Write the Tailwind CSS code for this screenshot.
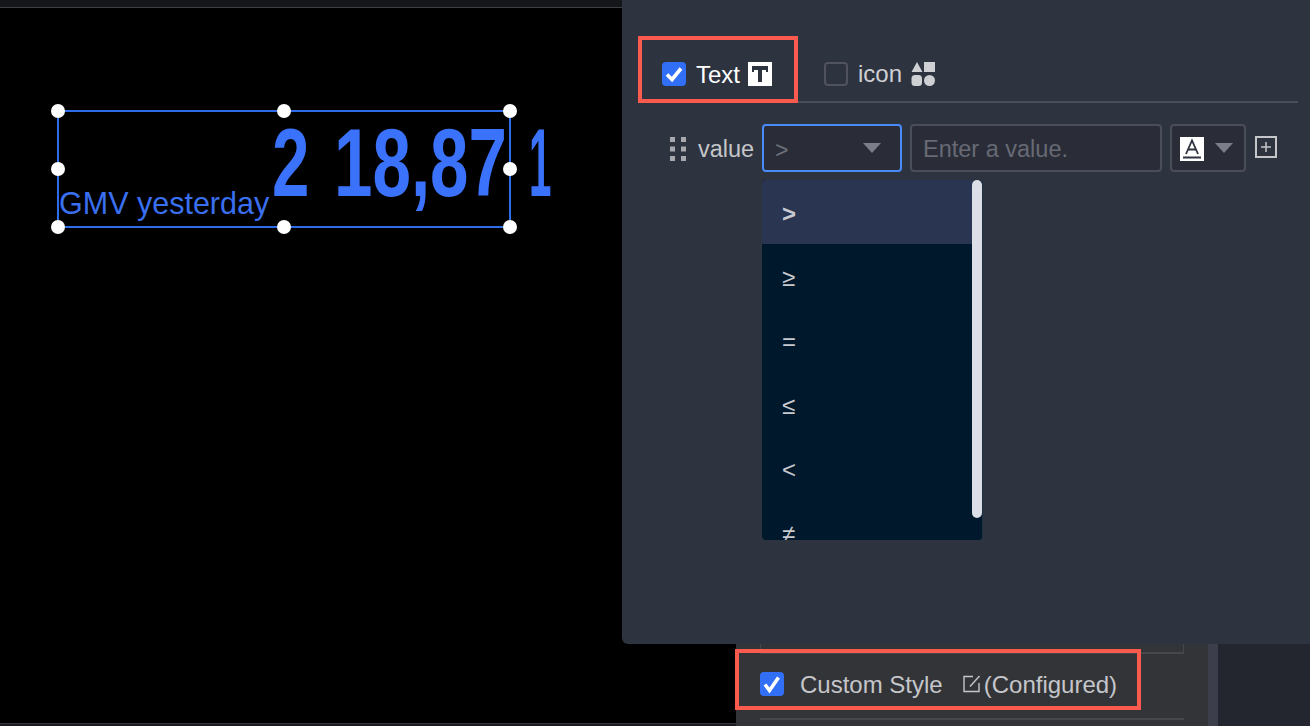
<!DOCTYPE html>
<html lang="en">
<head>
  <meta charset="UTF-8">
  <title>Custom Style</title>
  <script src="https://cdn.jsdelivr.net/npm/@tailwindcss/browser@4"></script>
</head>
<body class="bg-black font-['Liberation_Sans',Arial,sans-serif]">
  <div class="relative flex w-[1310px] h-[726px] overflow-hidden bg-black">

    <!-- canvas side -->
    <div class="relative w-[736px] h-full flex flex-col">
      <div class="h-[7px] bg-[#14161a]"></div>
      <div class="h-px bg-[#3c423f]"></div>
      <div class="relative flex-1">
        <!-- selected widget -->
        <div class="absolute left-[57px] top-[102px] w-[454px] h-[118px] border-2 border-[#2f6ce8]"></div>
        <span class="absolute left-[59px] top-[177px] text-[30.500px] leading-[36px] text-[#3a6ff0] whitespace-nowrap">GMV yesterday</span>
        <span class="absolute left-[272px] top-[100px] text-[96px] leading-[110px] font-bold text-[#3a72fb] origin-left scale-x-[0.7]">2</span>
        <span class="absolute left-[334px] top-[100px] text-[96px] leading-[110px] font-bold text-[#3a72fb] origin-left scale-x-[0.72] whitespace-nowrap">18,87</span>
        <span class="absolute left-[529px] top-[100px] text-[96px] leading-[110px] font-bold text-[#3a72fb] origin-left scale-x-[0.42]">1</span>
        <!-- handles -->
        <div class="absolute left-[51px] top-[96px] w-[14px] h-[14px] rounded-full bg-white"></div>
        <div class="absolute left-[277px] top-[96px] w-[14px] h-[14px] rounded-full bg-white"></div>
        <div class="absolute left-[503px] top-[96px] w-[14px] h-[14px] rounded-full bg-white"></div>
        <div class="absolute left-[51px] top-[154px] w-[14px] h-[14px] rounded-full bg-white"></div>
        <div class="absolute left-[503px] top-[154px] w-[14px] h-[14px] rounded-full bg-white"></div>
        <div class="absolute left-[51px] top-[212px] w-[14px] h-[14px] rounded-full bg-white"></div>
        <div class="absolute left-[277px] top-[212px] w-[14px] h-[14px] rounded-full bg-white"></div>
        <div class="absolute left-[503px] top-[212px] w-[14px] h-[14px] rounded-full bg-white"></div>
      </div>
      <div class="h-px bg-[#35363a]"></div>
      <div class="h-[2px] bg-[#1b1c1f]"></div>
    </div>

    <!-- settings column below the popup -->
    <div class="w-[472px] h-full bg-[#333438] flex flex-col pt-[644px] px-6">
      <div class="h-[10px] w-[424px] border-x border-b-2 border-[#46474b]"></div>
      <div class="flex items-center h-[60px] mb-1 -mx-6 pl-6">
        <span class="flex items-center justify-center w-6 h-6 rounded bg-[#316ff6]">
          <svg viewBox="0 0 24 24" class="w-6 h-6"><path d="M5 12.500l4.500 6 9-13" fill="none" stroke="#fff" stroke-width="3.600"/></svg>
        </span>
        <span class="ml-4 pt-[2px] text-[24px] text-[#c5c6c9] whitespace-nowrap">Custom Style</span>
        <svg viewBox="0 0 18 18" class="ml-[20px] w-[18px] h-[18px]"><path d="M10 1.500H1v15h15V8M16.500 1L7 11.500" fill="none" stroke="#c5c6c9" stroke-width="1.400"/></svg>
        <span class="ml-[3px] pt-[2px] text-[24px] text-[#c5c6c9] whitespace-nowrap">(Configured)</span>
      </div>
      <div class="h-[2px] w-[424px] bg-[#46474b]"></div>
    </div>
    <div class="w-[10px] h-full bg-[#3c3e4c]"></div>
    <div class="flex-1 h-full bg-[#24262f]"></div>

    <!-- red callout round the custom style row -->
    <div class="absolute left-[735px] top-[649px] w-[406px] h-[61px] border-4 border-[#fb5a4e]"></div>

    <!-- popup -->
    <div class="absolute left-[622px] top-0 w-[688px] h-[644px] bg-[#2e3340] rounded-bl-md pt-9">
      <div class="flex items-stretch h-[67px] ml-4 mr-3 border-b-2 border-[#4b4e58]">
        <div class="flex items-center w-[160px] h-[67px] -mb-[2px] border-4 border-[#fb5a4e] pl-5 pt-2">
          <span class="flex items-center justify-center w-6 h-6 rounded bg-[#316ff6]">
            <svg viewBox="0 0 24 24" class="w-6 h-6"><path d="M5 12.500l5 5 9-11" fill="none" stroke="#fff" stroke-width="3.600"/></svg>
          </span>
          <span class="ml-[10px] pt-[2px] text-[24px] text-white">Text</span>
          <svg viewBox="0 0 24 24" class="ml-2 w-6 h-6"><rect width="24" height="24" fill="#fff"/><path d="M4 4h16v6h-2V8h-4v12h-4V8H6v2H4z" fill="#2e3340"/></svg>
        </div>
        <div class="flex items-center pl-[26px] pt-[11px]">
          <span class="w-6 h-6 rounded border-2 border-[#50535d]"></span>
          <span class="ml-[10px] text-[24px] text-[#d0d1d4]">icon</span>
          <svg viewBox="0 0 24 24" class="ml-[9px] w-6 h-6"><path d="M6 0l5.500 10H.5z M13 0h11v10H13z" fill="#cfd0d3"/><rect x="0.500" y="13" width="10.500" height="11" rx="3.500" fill="#cfd0d3"/><circle cx="18.500" cy="18.500" r="5.500" fill="#cfd0d3"/></svg>
        </div>
      </div>

      <div class="flex items-center mt-[21px] pl-12 h-12">
        <svg viewBox="0 0 16 24" class="mt-[2px] w-4 h-6"><path d="M0 0h5v5H0zM11 0h5v5h-5zM0 9.500h5v5H0zM11 9.500h5v5h-5zM0 19h5v5H0zM11 19h5v5h-5z" fill="#a8a9ae"/></svg>
        <span class="ml-3 pt-1 w-[64px] text-[23.500px] text-[#c5c6c9]">value</span>
        <div class="relative flex items-center justify-between w-[140px] h-12 pl-[11px] pr-3 rounded bg-[#2a2d38] border-2 border-[#4a8cf7]">
          <span class="pt-1 text-[23px] text-[#6d7079]">&gt;</span>
          <span class="mr-[7px] w-0 h-0 border-x-[9px] border-x-transparent border-t-[10px] border-t-[#7b7e88]"></span>
        </div>
        <div class="flex items-center ml-2 w-[252px] h-12 pl-[11px] pt-[3px] rounded bg-[#2a2d38] border-2 border-[#4b4e58] text-[23.500px] text-[#676a74]">Enter a value.</div>
        <div class="flex items-center ml-2 w-[76px] h-12 pl-2 rounded bg-[#2a2d38] border-2 border-[#4b4e58]">
          <svg viewBox="0 0 24 24" class="mt-[2px] w-6 h-6"><rect width="24" height="24" fill="#fff"/><path d="M6 17L12 3.500 18 17M8 12.500h8" fill="none" stroke="#2e3340" stroke-width="1.800"/><path d="M3 20.500h18" stroke="#2e3340" stroke-width="2"/></svg>
          <span class="ml-[11px] w-0 h-0 border-x-[9px] border-x-transparent border-t-[10px] border-t-[#7b7e88]"></span>
        </div>
        <svg viewBox="0 0 22 22" class="ml-[9px] -mt-[2px] w-[22px] h-[22px]"><path d="M1 1h20v20H1z" fill="none" stroke="#c5c6c9" stroke-width="2"/><path d="M11 6v10M6 11h10" stroke="#c5c6c9" stroke-width="1.500"/></svg>
      </div>

      <!-- operator dropdown -->
      <div class="absolute left-[140px] top-[180px] w-[221px] h-[360px] overflow-hidden rounded bg-[#00182c] border-r border-[#1d3040] text-[24px] text-[#c8cad0]">
        <div class="flex items-center h-16 pl-[20px] pt-1 bg-[#2a3552] font-bold">&gt;</div>
        <div class="flex items-center h-16 pl-[20px] pt-[3px]">≥</div>
        <div class="flex items-center h-16 pl-[20px] pt-[3px]">=</div>
        <div class="flex items-center h-16 pl-[20px] pt-[3px]">≤</div>
        <div class="flex items-center h-16 pl-[20px] pt-1">&lt;</div>
        <div class="flex items-center h-16 pl-[20px] pt-[3px]">≠</div>
        <div class="absolute right-0 top-0 w-[10px] h-[338px] rounded-full bg-[#dcdfe8]"></div>
      </div>
    </div>
  </div>
</body>
</html>
